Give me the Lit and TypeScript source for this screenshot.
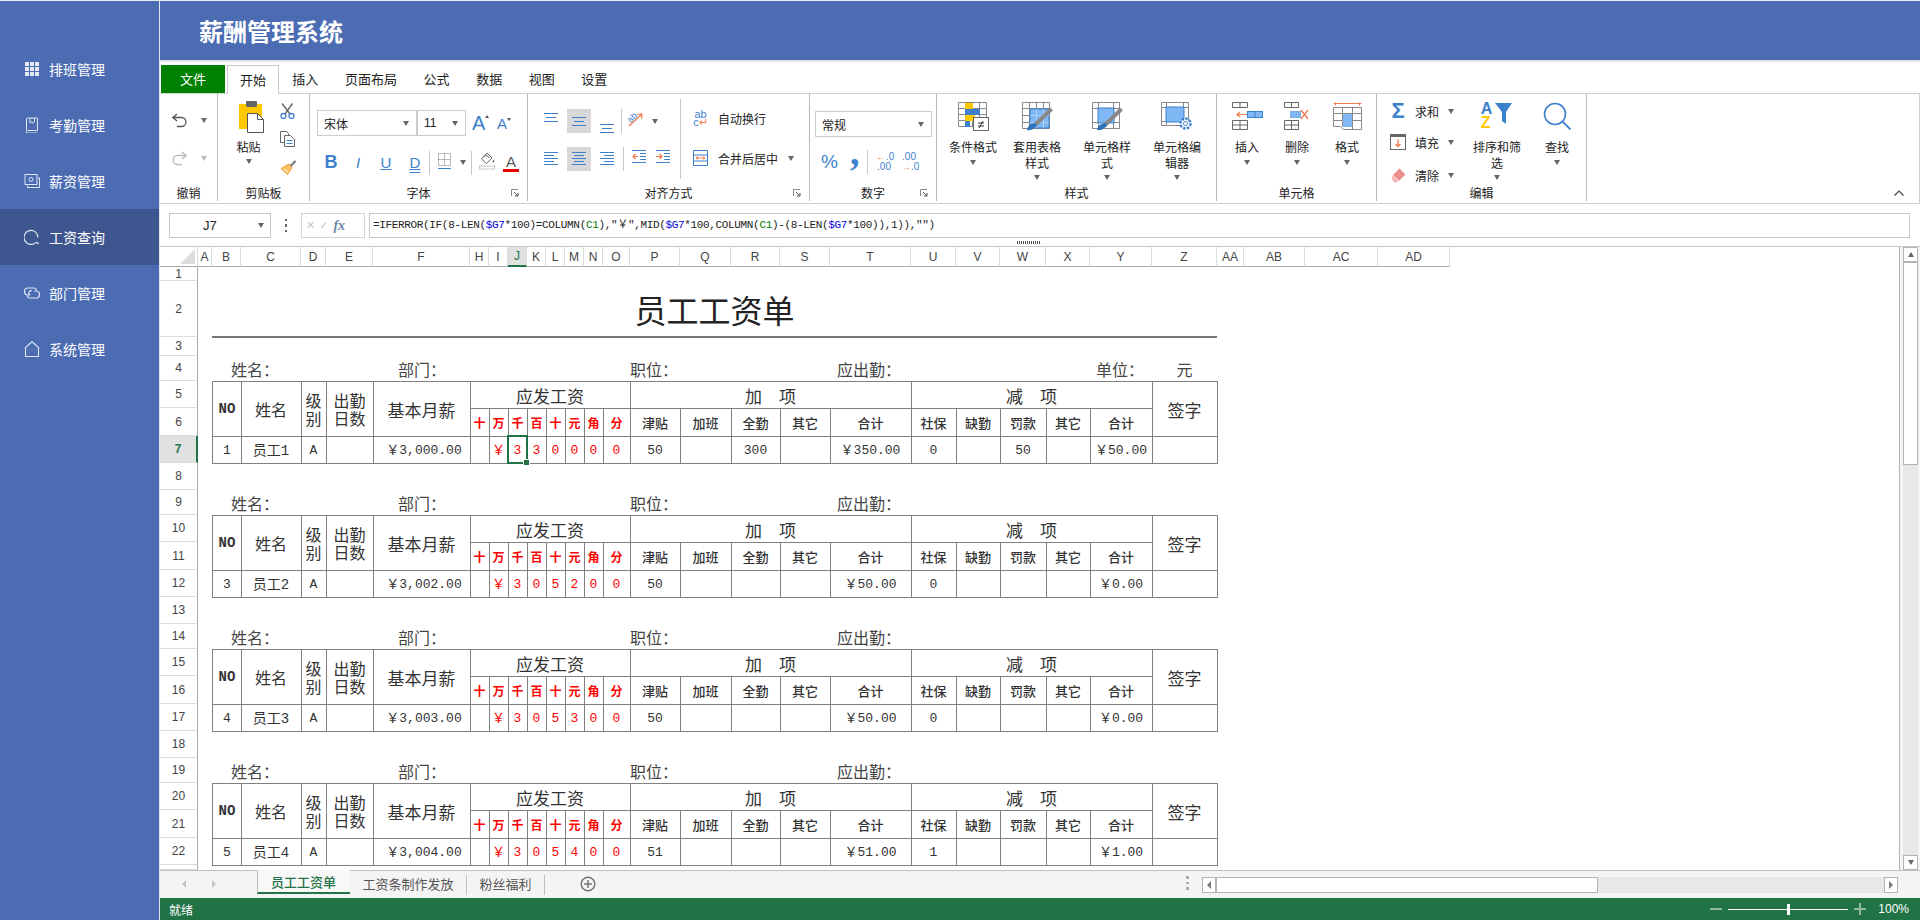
import { LitElement, css, html, svg } from "lit";
import { customElement } from "lit/decorators.js";

const BLUE = "#3d80cc";
const ORANGE = "#f47c50";

const COLS: [string, number][] = [
  ["", 38], ["A", 14], ["B", 29], ["C", 60], ["D", 25], ["E", 47], ["F", 97],
  ["H", 19], ["I", 19], ["J", 19], ["K", 19], ["L", 19], ["M", 19], ["N", 19], ["O", 27],
  ["P", 50], ["Q", 51], ["R", 49], ["S", 50], ["T", 81],
  ["U", 45], ["V", 44], ["W", 46], ["X", 44], ["Y", 62], ["Z", 65],
  ["AA", 27], ["AB", 61], ["AC", 73], ["AD", 72],
];
const colIdx = (name: string) => COLS.findIndex((c) => c[0] === name) + 1;

const ROW_H = [14, 56, 19, 25, 27, 28, 27, 27, 25, 27, 28, 27, 27, 25, 27, 28, 27, 27, 25, 27, 28, 27, 5];

const PEOPLE = [
  { start: 4, no: "1", name: "员工1", pay: "￥3,000.00", digits: ["", "￥", "3", "3", "0", "0", "0", "0"], add: ["50", "", "300", "", "￥350.00"], sub: ["0", "", "50", "", "￥50.00"] },
  { start: 9, no: "3", name: "员工2", pay: "￥3,002.00", digits: ["", "￥", "3", "0", "5", "2", "0", "0"], add: ["50", "", "", "", "￥50.00"], sub: ["0", "", "", "", "￥0.00"] },
  { start: 14, no: "4", name: "员工3", pay: "￥3,003.00", digits: ["", "￥", "3", "0", "5", "3", "0", "0"], add: ["50", "", "", "", "￥50.00"], sub: ["0", "", "", "", "￥0.00"] },
  { start: 19, no: "5", name: "员工4", pay: "￥3,004.00", digits: ["", "￥", "3", "0", "5", "4", "0", "0"], add: ["51", "", "", "", "￥51.00"], sub: ["1", "", "", "", "￥1.00"] },
];

const MONEY_COLS = ["H", "I", "J", "K", "L", "M", "N", "O"];
const MONEY_HEAD = ["十", "万", "千", "百", "十", "元", "角", "分"];
const ADD_COLS = ["P", "Q", "R", "S", "T"];
const ADD_HEAD = ["津贴", "加班", "全勤", "其它", "合计"];
const SUB_COLS = ["U", "V", "W", "X", "Y"];
const SUB_HEAD = ["社保", "缺勤", "罚款", "其它", "合计"];

const NAV = [
  { label: "排班管理", icon: "grid" },
  { label: "考勤管理", icon: "book" },
  { label: "薪资管理", icon: "money" },
  { label: "工资查询", icon: "search", active: true },
  { label: "部门管理", icon: "link" },
  { label: "系统管理", icon: "home" },
];

const navIcons: Record<string, unknown> = {
  grid: svg`<g fill="#e6eaf5"><rect x="1" y="1" width="4" height="4"/><rect x="6" y="1" width="4" height="4"/><rect x="11" y="1" width="4" height="4"/><rect x="1" y="6" width="4" height="4"/><rect x="6" y="6" width="4" height="4"/><rect x="11" y="6" width="4" height="4"/><rect x="1" y="11" width="4" height="4"/><rect x="6" y="11" width="4" height="4"/><rect x="11" y="11" width="4" height="4"/></g>`,
  book: svg`<g fill="none" stroke="#dfe5f3"><path d="M2.500 13V2a1 1 0 0 1 1-1h10v12.500H3.500a1.200 1.200 0 0 0 0 2.500h10"/><path d="M6 1v5l1.500-1 1.500 1 1.500-1V1"/></g>`,
  money: svg`<g fill="none" stroke="#dfe5f3"><rect x="1" y="1.500" width="12" height="10"/><circle cx="7" cy="6.500" r="2"/><path d="M14 5h1.500v9.500H3.500V12.500"/></g>`,
  search: svg`<g fill="none" stroke="#dfe5f3" stroke-width="1.200"><path d="M12 13.300A7 7 0 1 1 14 8.500"/><path d="M12.500 13l2 2"/></g>`,
  link: svg`<g fill="none" stroke="#dfe5f3" stroke-width="1.200"><path d="M6 10H4a3 3 0 0 1 0-7h6a3 3 0 0 1 2.700 2"/><path d="M10 6h2a3 3 0 0 1 0 7H6a3 3 0 0 1-2.700-2"/><path d="M6 10a2 2 0 0 1 2-4"/></g>`,
  home: svg`<path d="M1.500 15.500V6.500L8 .8l6.500 5.700v9z" fill="none" stroke="#dfe5f3" stroke-width="1.100"/>`,
};

const icon = (w: number, h: number, body: unknown) =>
  html`<svg width=${w} height=${h} viewBox="0 0 ${w} ${h}">${body}</svg>`;

const lines = (rows: [number, number, number][], color = BLUE) =>
  rows.map(([x, y, w]) => svg`<rect x=${x} y=${y} width=${w} height="1" fill=${color}/>`);

const ic = {
  undo: icon(17, 15, svg`<path d="M6 1 1.800 4.500 6 8M2 4.500h8.500a4.500 4.500 0 0 1 0 9H6" fill="none" stroke="#555" stroke-width="1.300"/>`),
  redo: icon(17, 15, svg`<path d="M11 1l4.200 3.500L11 8M15 4.500H6.500a4.500 4.500 0 0 0 0 9H11" fill="none" stroke="#bbb" stroke-width="1.300"/>`),
  paste: icon(25, 32, svg`<rect x="0" y="3" width="23" height="25" fill="#ffc800"/><rect x="7" y="0" width="11" height="6" rx="1" fill="#666"/><path d="M8.500 12.500h10l6 6v13h-16z" fill="#fff" stroke="#555"/><path d="M18.500 12.500v6h6" fill="none" stroke="#555"/>`),
  cut: icon(15, 16, svg`<path d="M2 .5 10 11M12.500 .5 5 11" stroke="#666" stroke-width="1.400" fill="none"/><circle cx="3.500" cy="13" r="2.500" fill="none" stroke="${BLUE}" stroke-width="1.300"/><circle cx="11.500" cy="13" r="2.500" fill="none" stroke="${BLUE}" stroke-width="1.300"/>`),
  copy: icon(15, 16, svg`<path d="M.5.5h6l2 2v9H.5z" fill="#fff" stroke="#666"/><path d="M4.500 4.500h6l4 4v7h-10z" fill="#fff" stroke="#666"/><path d="M6.500 9.500h6M6.500 12.500h6" stroke="${BLUE}"/>`),
  brush: icon(17, 15, svg`<path d="M9 4 1 8.500l6.500 6L12 7.500z" fill="#ffc45e" stroke="#f29a35"/><path d="M10.500 6 15.500 1" stroke="#777" stroke-width="2.200"/><path d="M4 9l4 3" stroke="#fff"/>`),
  border: icon(13, 17, svg`<path d="M.5 .5h12v12H.5zM.5 6.500h12M6.500 .5v12" fill="none" stroke="#777" stroke-dasharray="1 1"/><rect x="0" y="15" width="13" height="1" fill="${BLUE}"/>`),
  fill: icon(17, 18, svg`<path d="M8 1 2.500 7 7.500 11.500 13 6z" fill="#fff" stroke="#666"/><path d="M5 5c1-2 4-2 5 1" fill="none" stroke="#666"/><path d="M14.500 7.500c1 1.500 1.500 2.200 0 3-1.500-.8-1-1.500 0-3z" fill="#666"/><rect x=".5" y="14" width="15" height="3" fill="#fff" stroke="#c8c8c8"/>`),
  vAlign: icon(14, 9, lines([[0, 0, 14], [2, 4, 10], [0, 8, 14]])),
  left: icon(14, 15, lines([[0, 0, 14], [0, 3, 10], [0, 6, 14], [0, 9, 10], [0, 12, 14]])),
  center: icon(14, 15, lines([[0, 0, 14], [2, 3, 10], [0, 6, 14], [2, 9, 10], [0, 12, 14]])),
  right: icon(14, 15, lines([[0, 0, 14], [4, 3, 10], [0, 6, 14], [4, 9, 10], [0, 12, 14]])),
  orient: icon(16, 15, svg`<text x="1" y="9" font-size="9" font-family="Liberation Sans" fill="${BLUE}" transform="rotate(-45 5 7)">ab</text><path d="M2 14 14 3M10 2.500l5-.5-.5 5" fill="none" stroke="${ORANGE}" stroke-width="1.200"/>`),
  indentL: icon(14, 15, svg`${lines([[0, 0, 14], [8, 3, 6], [8, 6, 6], [8, 9, 6], [0, 12, 14]])}<path d="M6 6.500H1M3.500 4 1 6.500 3.500 9" fill="none" stroke="${ORANGE}" stroke-width="1.200"/>`),
  indentR: icon(14, 15, svg`${lines([[0, 0, 14], [8, 3, 6], [8, 6, 6], [8, 9, 6], [0, 12, 14]])}<path d="M0 6.500h5.500M3.500 4 6 6.500 3.500 9" fill="none" stroke="${ORANGE}" stroke-width="1.200"/>`),
  merge: icon(15, 16, svg`<path d="M.5 .5h14v15H.5zM.5 5h14M.5 11h14" fill="none" stroke="${BLUE}"/><path d="M3 8h9M5 6.500 3 8l2 1.500M10 6.500 12 8l-2 1.500" fill="none" stroke="${ORANGE}"/>`),
  cond: icon(31, 29, svg`<path d="M.5 .5h28v24H.5zM.5 6.500h28M.5 12.500h28M.5 18.500h28M7.500 .5v24M14.500 .5v24M21.500 .5v24" fill="none" stroke="#888"/><rect x="7" y="1" width="8" height="6" fill="#ffc800"/><rect x="7" y="7" width="15" height="6" fill="#3d80cc"/><rect x="7" y="13" width="10" height="6" fill="#ffc800"/><rect x="7" y="19" width="5" height="6" fill="#3d80cc"/><rect x="15.500" y="15.500" width="15" height="13" fill="#fff" stroke="#666"/><path d="M20 21h6M20 24h6M25 19l-4 7" stroke="#333"/>`),
  tbl: icon(31, 29, svg`<path d="M.5 .5h27v26H.5zM.5 6.500h27M.5 13.500h27M.5 20.500h27M7.500 .5v26M14.500 .5v26M21.500 .5v26" fill="none" stroke="#888"/><rect x="8" y="7" width="19" height="19" fill="#7fb8f5" stroke="#3d80cc"/><path d="M8 13.500h19M8 20.500h19M14.500 7v19M21.500 7v19" stroke="#a9cff7"/><path d="M12 24 29.500 7" stroke="#888" stroke-width="4"/><path d="M5 28c1-5 4-6 8-7l2 2c-2 3-5 6-10 5z" fill="#2e74b8"/>`),
  cellStyle: icon(31, 29, svg`<path d="M.5 .5h27v26H.5zM.5 6.500h27M.5 20.500h27M6.500 .5v26M21.500 .5v26" fill="none" stroke="#888"/><rect x="6" y="6" width="16" height="15" fill="#7fb8f5" stroke="#3d80cc"/><path d="M12 24 29.500 7" stroke="#888" stroke-width="4"/><path d="M5 28c1-5 4-6 8-7l2 2c-2 3-5 6-10 5z" fill="#2e74b8"/>`),
  cellEdit: icon(32, 29, svg`<path d="M.5 .5h27v23H.5zM.5 5.500h27M.5 19.500h27M5.500 .5v23M22.500 .5v23" fill="none" stroke="#888"/><rect x="5" y="5" width="18" height="15" fill="#7fb8f5" stroke="#3d80cc"/><circle cx="24.500" cy="21.500" r="5" fill="#fff" stroke="#3d80cc" stroke-width="2.500" stroke-dasharray="2.500 1.300"/><circle cx="24.500" cy="21.500" r="2" fill="none" stroke="#3d80cc"/>`),
  insert: icon(31, 28, svg`<path d="M.5 .5h15v5H.5zM8 .5v5M.5 18.500h15v9H.5zM.5 23h15M8 18.500v9" fill="none" stroke="#666"/><rect x="15.500" y="9.500" width="15" height="6" fill="#7fb8f5" stroke="#3d80cc"/><path d="M23 9.500v6" stroke="#3d80cc"/><path d="M15 12.500H5M8 10 5 12.500 8 15" fill="none" stroke="${ORANGE}" stroke-width="1.200"/>`),
  del: icon(26, 28, svg`<path d="M.5 .5h14v5H.5zM7.500 .5v5M.5 18.500h14v9H.5zM.5 23h14M7.500 18.500v9" fill="none" stroke="#666"/><rect x="6.500" y="9.500" width="10" height="6" fill="#7fb8f5" stroke="#3d80cc" stroke-dasharray="1 1"/><path d="M17 8l7 9M24 8l-7 9" stroke="${ORANGE}" stroke-width="1.300"/>`),
  fmt: icon(29, 28, svg`<path d="M.5 1.500h28M2.500 .5v3M26.500 .5v3" stroke="${ORANGE}" fill="none"/><path d="M.5 5.500h28v22H10.500l-3-3H.5zM.5 11.500h28M.5 18.500h28M9.500 5.500v19M19.500 5.500v22" fill="none" stroke="#888"/><rect x="10" y="12" width="9" height="13" fill="#7fb8f5"/>`),
  fillDown: icon(16, 16, svg`<rect x=".5" y=".5" width="15" height="15" fill="#fff" stroke="#666"/><rect x="0" y="0" width="16" height="3" fill="#666"/><path d="M8 5.500v7M5.500 10 8 12.500 10.500 10" fill="none" stroke="${ORANGE}" stroke-width="1.400"/>`),
  eraser: icon(15, 15, svg`<path d="M8.500 .5 14.500 6.500 8 13 2 7z" fill="#ee8f8f"/><path d="M1.800 7.500 7.500 13.500 5 14.500 2.500 14 .5 10z" fill="#f3b3b3"/>`),
  funnel: icon(18, 24, svg`<path d="M0 1h17l-6 9v12l-4-3v-9z" fill="${BLUE}"/>`),
  find: icon(28, 28, svg`<circle cx="12" cy="12" r="10.500" fill="none" stroke="${BLUE}" stroke-width="1.600"/><path d="M19.500 19.500l8 8" stroke="${BLUE}" stroke-width="1.800"/>`),
  launcher: icon(8, 8, svg`<path d="M.5 7V.5H7" fill="none" stroke="#888"/><path d="M3 3l4 4M7 4v3H4" fill="none" stroke="#555"/>`),
  plusCircle: icon(16, 16, svg`<circle cx="8" cy="8" r="6.800" fill="none" stroke="#777" stroke-width="1.500"/><path d="M8 4v8M4 8h8" stroke="#777" stroke-width="1.500"/>`),
};

@customElement("app-root")
export class AppRoot extends LitElement {
  private cell(col: string, row: number, body: unknown, cls = "", colEnd?: string, rowSpan = 1) {
    const start = colIdx(col);
    const end = colEnd ? colIdx(colEnd) + 1 : start + 1;
    const area = `grid-column:${start}/${end};grid-row:${row + 1}/span ${rowSpan}`;
    return html`<div class="c ${cls}" style=${area}>${body}</div>`;
  }

  private block(p: (typeof PEOPLE)[number]) {
    const s = p.start;
    const first = s === 4;
    return html`
      ${this.cell("B", s, "姓名：", "lab pl19", "E")}
      ${this.cell("F", s, "部门：", "lab pl25")}
      ${this.cell("P", s, "职位：", "lab", "S")}
      ${this.cell("T", s, "应出勤：", "lab pl7", "X")}
      ${first ? this.cell("Y", s, "单位：", "lab pl6") : ""}
      ${first ? this.cell("Z", s, "元", "lab ctr") : ""}

      ${this.cell("B", s + 1, "NO", "b lft bt ctr no", undefined, 2)}
      ${this.cell("C", s + 1, "姓名", "b bt ctr h16", undefined, 2)}
      ${this.cell("D", s + 1, html`级<br />别`, "b bt ctr h16 tight", undefined, 2)}
      ${this.cell("E", s + 1, html`出勤<br />日数`, "b bt ctr h16 tight", undefined, 2)}
      ${this.cell("F", s + 1, "基本月薪", "b bt ctr h17", undefined, 2)}
      ${this.cell("H", s + 1, "应发工资", "b bt ctr h17", "O")}
      ${this.cell("P", s + 1, "加　项", "b bt ctr h17", "T")}
      ${this.cell("U", s + 1, "减　项", "b bt ctr h17", "Y")}
      ${this.cell("Z", s + 1, "签字", "b bt ctr h17", undefined, 2)}

      ${MONEY_COLS.map((c, i) => this.cell(c, s + 2, MONEY_HEAD[i], "b ctr redhead"))}
      ${ADD_COLS.map((c, i) => this.cell(c, s + 2, ADD_HEAD[i], "b ctr sub"))}
      ${SUB_COLS.map((c, i) => this.cell(c, s + 2, SUB_HEAD[i], "b ctr sub"))}

      ${this.cell("B", s + 3, p.no, "b lft ctr num")}
      ${this.cell("C", s + 3, p.name, "b ctr num cjk")}
      ${this.cell("D", s + 3, "A", "b ctr num")}
      ${this.cell("E", s + 3, "", "b")}
      ${this.cell("F", s + 3, p.pay, "b ctr num pay")}
      ${MONEY_COLS.map((c, i) =>
        c === "J" && first
          ? html`<div class="c b red num sel-cell" style="grid-column:${colIdx(c)};grid-row:${s + 4}">
              ${p.digits[i]}<span class="sel"><span class="handle"></span></span>
            </div>`
          : this.cell(c, s + 3, p.digits[i], "b red num"),
      )}
      ${ADD_COLS.map((c, i) => this.cell(c, s + 3, p.add[i], "b ctr num"))}
      ${SUB_COLS.map((c, i) => this.cell(c, s + 3, p.sub[i], "b ctr num"))}
      ${this.cell("Z", s + 3, "", "b")}
    `;
  }

  private sheet() {
    const cols = COLS.map((c) => c[1] + "px").join(" ") + " 1fr";
    const rows = "20px " + ROW_H.map((h) => h + "px").join(" ");
    return html`
      <div class="sheet" style="grid-template-columns:${cols};grid-template-rows:${rows}">
        <div class="corner"><i></i></div>
        ${COLS.slice(1).map(
          ([n], i) => html`<div class="ch ${n === "J" ? "on" : ""}" style="grid-column:${i + 2};grid-row:1">${n}</div>`,
        )}
        ${ROW_H.map(
          (_, i) => html`<div class="rh ${i + 1 === 7 ? "on" : ""}" style="grid-column:1;grid-row:${i + 2}">${i + 1 === 23 ? "" : i + 1}</div>`,
        )}
        ${this.cell("B", 2, "员工工资单", "title", "Z")}
        ${PEOPLE.map((p) => this.block(p))}
      </div>
    `;
  }

  private big(ico: unknown, label: unknown, cls = "") {
    return html`<div class="big ${cls}">
      <div class="big-ico">${ico}</div>
      <div class="big-txt">${label}</div>
      <i class="caret"></i>
    </div>`;
  }

  private label(text: string, launcher = false) {
    return html`<div class="glabel"><span></span><span>${text}</span>${launcher ? html`<span class="launch">${ic.launcher}</span>` : html`<span></span>`}</div>`;
  }

  private ribbon() {
    return html`
      <div class="ribbon">
        <section class="group" style="width:58px">
          <div class="body undo">
            <div class="row">${ic.undo}<i class="caret ml13"></i></div>
            <div class="row">${ic.redo}<i class="caret light ml13"></i></div>
          </div>
          ${this.label("撤销")}
        </section>

        <section class="group" style="width:92px">
          <div class="body clip">
            <div class="paste">
              ${ic.paste}
              <div class="paste-txt">粘贴</div>
              <i class="caret"></i>
            </div>
            <div class="clip-side">${ic.cut}${ic.copy}${ic.brush}</div>
          </div>
          ${this.label("剪贴板")}
        </section>

        <section class="group" style="width:218px">
          <div class="body font">
            <div class="row r1">
              <div class="select" style="width:100px"><span>宋体</span><i class="caret"></i></div>
              <div class="select" style="width:49px"><span class="en">11</span><i class="caret"></i></div>
              <span class="grow big-a">A<i class="tri up"></i></span>
              <span class="grow small-a">A<i class="tri"></i></span>
            </div>
            <div class="row r2">
              <span class="fs" style="width:28px"><b class="bl">B</b></span>
              <span class="fs" style="width:26px"><em class="bl">I</em></span>
              <span class="fs" style="width:30px"><u class="bl">U</u></span>
              <span class="fs" style="width:28px"><u class="bl dbl">D</u></span>
              <i class="vsep"></i>
              <span class="ml8">${ic.border}</span>
              <i class="caret ml9"></i>
              <i class="vsep ml5"></i>
              <span class="ml7">${ic.fill}</span>
              <span class="color-a ml7">A</span>
            </div>
          </div>
          ${this.label("字体", true)}
        </section>

        <section class="group" style="width:282px">
          <div class="body align">
            <div class="al-left">
              <div class="row">
                <span class="al vt">${ic.vAlign}</span>
                <span class="al on">${ic.vAlign}</span>
                <span class="al vb">${ic.vAlign}</span>
                <i class="vsep al-sep"></i>
                <span class="ml5">${ic.orient}</span>
                <i class="caret ml9"></i>
              </div>
              <div class="row r2">
                <span class="al">${ic.left}</span>
                <span class="al on">${ic.center}</span>
                <span class="al">${ic.right}</span>
                <i class="vsep"></i>
                <span class="ml8">${ic.indentL}</span>
                <span class="ml10">${ic.indentR}</span>
              </div>
            </div>
            <i class="tall-sep"></i>
            <div class="al-right">
              <div class="row">
                <span class="wrap-ico"><span>ab</span><span>c<em>↵</em></span></span>
                <span class="ml10">自动换行</span>
              </div>
              <div class="row">
                ${ic.merge}
                <span class="ml10">合并后居中</span>
                <i class="caret ml10"></i>
              </div>
            </div>
          </div>
          ${this.label("对齐方式", true)}
        </section>

        <section class="group" style="width:127px">
          <div class="body num-g">
            <div class="select" style="width:117px"><span>常规</span><i class="caret"></i></div>
            <div class="row r2">
              <span class="pct">%</span>
              <span class="comma">,</span>
              <i class="vsep s9"></i>
              <span class="dec ml8"><span><em>←</em>.0</span><span>.00</span></span>
              <span class="dec ml10"><span>.00</span><span><em>→</em>.0</span></span>
            </div>
          </div>
          ${this.label("数字", true)}
        </section>

        <section class="group" style="width:280px">
          <div class="body bigs" style="padding-left:7px">
            ${this.big(ic.cond, "条件格式", "w58")}
            ${this.big(ic.tbl, html`套用表格<br />样式`)}
            ${this.big(ic.cellStyle, html`单元格样<br />式`)}
            ${this.big(ic.cellEdit, html`单元格编<br />辑器`)}
          </div>
          ${this.label("样式")}
        </section>

        <section class="group" style="width:160px">
          <div class="body bigs" style="padding-left:5px">
            ${this.big(ic.insert, "插入", "w50")}
            ${this.big(ic.del, "删除", "w50")}
            ${this.big(ic.fmt, "格式", "w50")}
          </div>
          ${this.label("单元格")}
        </section>

        <section class="group" style="width:210px">
          <div class="body bigs">
            <div class="edit-col">
              <div class="row"><span class="ico16 sigma">Σ</span><span class="ml9">求和</span><i class="caret ml9"></i></div>
              <div class="row"><span class="ico16">${ic.fillDown}</span><span class="ml9">填充</span><i class="caret ml9"></i></div>
              <div class="row"><span class="ico16">${ic.eraser}</span><span class="ml9">清除</span><i class="caret ml9"></i></div>
            </div>
            ${this.big(html`<span class="sort"><span class="az"><span>A</span><span>Z</span></span>${ic.funnel}</span>`, html`排序和筛<br />选`, "w60")}
            ${this.big(ic.find, "查找", "w60")}
          </div>
          ${this.label("编辑")}
        </section>

        <div class="collapse"><svg width="10" height="6" viewBox="0 0 10 6"><path d="M.5 5.500 5 1l4.500 4.500" fill="none" stroke="#444" stroke-width="1.200"/></svg></div>
      </div>
    `;
  }

  render() {
    return html`
      <aside class="side">
        ${NAV.map(
          (n) => html`<div class="nav ${n.active ? "active" : ""}">
            <svg width="16" height="16" viewBox="0 0 16 16">${navIcons[n.icon]}</svg>
            <span>${n.label}</span>
          </div>`,
        )}
      </aside>
      <main class="main">
        <header class="topbar">薪酬管理系统</header>
        <nav class="tabs">
          <div class="file">文件</div>
          <div class="tab active">开始</div>
          ${["插入", "页面布局", "公式", "数据", "视图", "设置"].map((t) => html`<div class="tab">${t}</div>`)}
        </nav>
        ${this.ribbon()}
        <div class="fbar">
          <div class="fbar-row">
            <div class="namebox"><span>J7</span><i class="caret"></i></div>
            <div class="kebab"><i></i><i></i><i></i></div>
            <div class="fxbox"><span>✕</span><span>✓</span><em>fx</em></div>
            <div class="formula">=IFERROR(IF(8-LEN(<span class="fb">$G7</span>*100)=COLUMN(<span class="fg">C1</span>),"￥",MID(<span class="fb">$G7</span>*100,COLUMN(<span class="fg">C1</span>)-(8-LEN(<span class="fb">$G7</span>*100)),1)),"")</div>
          </div>
          <div class="splitter"></div>
        </div>
        <div class="work">
          ${this.sheet()}
          <div class="vscroll">
            <div class="sb-btn"><i class="tri-up"></i></div>
            <div class="v-thumb"></div>
            <div class="v-track"></div>
            <div class="sb-btn"><i class="caret"></i></div>
          </div>
        </div>
        <div class="sheetbar">
          <span class="arrow l"></span>
          <span class="arrow r"></span>
          <div class="stab active">员工工资单</div>
          <div class="stab">工资条制作发放</div>
          <div class="stab">粉丝福利</div>
          <span class="plus">${ic.plusCircle}</span>
          <div class="kebab dim"><i></i><i></i><i></i></div>
          <div class="hscroll">
            <div class="h-btn"><i class="arrow-l"></i></div>
            <div class="h-thumb"></div>
            <div class="h-track"></div>
            <div class="h-btn"><i class="arrow-r"></i></div>
          </div>
        </div>
        <footer class="status">
          <span>就绪</span>
          <div class="zoom">
            <i class="minus"></i>
            <div class="slider"><i class="knob"></i></div>
            <i class="plus-s"></i>
            <span class="pcnt">100%</span>
          </div>
        </footer>
      </main>
    `;
  }

  static styles = css`
    :host {
      --blue: #3d80cc;
      --orange: #f47c50;
      display: flex;
      width: 1920px;
      height: 920px;
      overflow: hidden;
      box-sizing: border-box;
      padding-top: 1px;
      background: #e9ebf0;
      font-family: "Noto Sans CJK SC", "Liberation Sans", sans-serif;
      font-size: 12px;
      color: #222;
    }
    i {
      display: block;
      font-style: normal;
    }

    .side {
      width: 159px;
      flex: none;
      padding-top: 40px;
      background: #4b6cb3;
      border-right: 1px solid #e3e6f0;
      color: #fff;
      font-size: 14px;
    }
    .nav {
      display: flex;
      align-items: center;
      gap: 9px;
      height: 56px;
      padding-left: 24px;
    }
    .nav.active {
      background: #3e568f;
    }

    .main {
      flex: 1;
      min-width: 0;
      display: flex;
      flex-direction: column;
      background: #fff;
    }
    .topbar {
      height: 59px;
      padding-left: 39px;
      background: #4b6cb3;
      color: #fff;
      font-size: 24px;
      font-weight: 700;
      line-height: 59px;
    }
    .tabs {
      display: flex;
      align-items: flex-end;
      height: 33px;
      padding-left: 1px;
      border-top: 2px solid #e1e4ee;
      box-sizing: border-box;
      font-size: 13px;
    }
    .file {
      width: 64px;
      height: 28px;
      margin-right: 2px;
      background: #008000;
      color: #fff;
      text-align: center;
      line-height: 27px;
    }
    .tab {
      height: 28px;
      padding: 0 13.300px;
      line-height: 27px;
    }
    .tab.active {
      position: relative;
      z-index: 1;
      height: 29px;
      margin-bottom: -1px;
      padding: 0 12px;
      background: #fff;
      border: 1px solid #c8c8c8;
      border-bottom: 0;
      box-sizing: border-box;
    }

    .ribbon {
      display: flex;
      height: 111px;
      box-sizing: border-box;
      border: 1px solid #cfcfcf;
      border-width: 1px 1px 1px 0;
    }
    .group {
      flex: none;
      display: flex;
      flex-direction: column;
      height: 107px;
      box-sizing: border-box;
      border-right: 1px solid #b8b8b8;
    }
    .body {
      height: 90px;
      box-sizing: border-box;
    }
    .glabel {
      display: grid;
      grid-template-columns: 1fr auto 1fr;
      align-items: center;
      height: 17px;
      line-height: 17px;
      font-size: 12px;
    }
    .launch {
      justify-self: end;
      display: flex;
      margin-right: 8px;
    }
    .row {
      display: flex;
      align-items: center;
    }
    .caret {
      flex: none;
      width: 0;
      height: 0;
      border: 3.500px solid transparent;
      border-top: 5px solid #666;
      border-bottom: 0;
    }
    .caret.light {
      border-top-color: #bbb;
    }
    .ml5 { margin-left: 5px; }
    .ml7 { margin-left: 7px; }
    .ml8 { margin-left: 8px; }
    .ml9 { margin-left: 9px; }
    .ml10 { margin-left: 10px; }
    .ml13 { margin-left: 13px; }
    .vsep {
      flex: none;
      width: 1px;
      height: 24px;
      background: #c8c8c8;
    }
    .s9 {
      margin-left: 9px;
    }

    .undo {
      display: grid;
      grid-template-rows: 38px 38px;
      padding: 7px 0 0 11px;
    }

    .clip {
      display: flex;
    }
    .paste {
      width: 61px;
      padding-top: 7px;
      display: flex;
      flex-direction: column;
      align-items: center;
    }
    .paste svg {
      margin-left: 6px;
    }
    .paste-txt {
      margin-top: 6px;
      line-height: 15px;
    }
    .paste .caret {
      margin-top: 5px;
    }
    .clip-side {
      display: grid;
      grid-auto-rows: 28px;
      align-items: center;
      padding-top: 3px;
      margin-left: 1px;
    }

    .font {
      padding: 16px 0 0 7px;
    }
    .font .r1 {
      height: 26px;
    }
    .font .r2 {
      height: 19px;
      margin-top: 17px;
    }
    .select {
      flex: none;
      display: flex;
      align-items: center;
      justify-content: space-between;
      height: 26px;
      box-sizing: border-box;
      padding: 0 7px 0 6px;
      border: 1px solid #ccc;
      font-size: 12px;
    }
    .en {
      font-family: "Liberation Sans", sans-serif;
    }
    .grow {
      position: relative;
      font-family: "Liberation Sans", sans-serif;
      color: var(--blue);
    }
    .big-a {
      width: 16px;
      margin-left: 6px;
      font-size: 20px;
    }
    .small-a {
      width: 13px;
      margin-left: 9px;
      font-size: 15px;
    }
    .tri {
      position: absolute;
      top: 3px;
      right: -1px;
      border: 2.500px solid transparent;
      border-top: 3px solid #555;
      border-bottom: 0;
    }
    .tri.up {
      border-top: 0;
      border-bottom: 3px solid #555;
    }
    .fs {
      flex: none;
      text-align: center;
      font-family: "Liberation Sans", sans-serif;
      font-size: 15px;
    }
    .bl {
      color: var(--blue);
    }
    .fs b {
      font-size: 18px;
    }
    .dbl {
      text-decoration-style: double;
    }
    .color-a {
      width: 16px;
      border-bottom: 3px solid #e60000;
      color: #555;
      font-family: "Liberation Sans", sans-serif;
      font-size: 15px;
      line-height: 15px;
      text-align: center;
    }

    .align {
      display: flex;
    }
    .al-left {
      width: 141px;
      padding: 15px 0 0 11px;
    }
    .al-left .r2 {
      margin-top: 14px;
    }
    .al {
      flex: none;
      width: 24px;
      height: 24px;
      margin-right: 4px;
      box-sizing: border-box;
      display: grid;
      justify-items: center;
      align-items: center;
    }
    .al.on {
      background: #d8d8d8;
    }
    .al.vt {
      align-items: start;
      padding-top: 4px;
    }
    .al.vb {
      align-items: end;
    }
    .al-sep {
      margin-left: -2px;
    }
    .tall-sep {
      flex: none;
      width: 1px;
      height: 80px;
      margin-top: 5px;
      background: #c8c8c8;
    }
    .al-right {
      display: grid;
      grid-template-rows: 40px 40px;
      padding: 4px 0 0 12px;
    }
    .wrap-ico {
      display: flex;
      flex-direction: column;
      width: 15px;
      color: var(--blue);
      font-family: "Liberation Sans", sans-serif;
      font-size: 11px;
      line-height: 8px;
      text-align: center;
    }
    .wrap-ico em {
      color: var(--orange);
      font-style: normal;
    }

    .num-g {
      padding: 17px 0 0 5px;
    }
    .num-g .r2 {
      height: 19px;
      margin-top: 15px;
      padding-left: 6px;
    }
    .pct {
      width: 15px;
      color: var(--blue);
      font-family: "Liberation Sans", sans-serif;
      font-size: 19px;
    }
    .comma {
      width: 8px;
      height: 19px;
      margin-left: 14px;
      color: var(--blue);
      font-family: "Liberation Serif", serif;
      font-size: 38px;
      font-weight: 700;
      line-height: 0;
    }
    .dec {
      display: flex;
      flex-direction: column;
      width: 15px;
      color: var(--blue);
      font-family: "Liberation Sans", sans-serif;
      font-size: 10px;
      line-height: 10px;
      text-align: right;
    }
    .dec em {
      color: var(--orange);
      font-style: normal;
    }

    .bigs {
      display: flex;
    }
    .big {
      flex: none;
      width: 70px;
      padding-top: 8px;
      display: flex;
      flex-direction: column;
      align-items: center;
    }
    .w50 { width: 50px; }
    .w58 { width: 58px; }
    .w60 { width: 60px; }
    .big-ico {
      height: 29px;
      margin-bottom: 8px;
      line-height: 0;
    }
    .big-txt {
      line-height: 15.500px;
      text-align: center;
    }
    .big .caret {
      margin-top: 5px;
    }
    .edit-col {
      flex: none;
      width: 90px;
      padding: 2px 0 0 13px;
      box-sizing: border-box;
      display: grid;
      grid-template-rows: 30px 32px 34px;
    }
    .ico16 {
      flex: none;
      width: 16px;
      display: flex;
      justify-content: center;
    }
    .sigma {
      color: var(--blue);
      font-family: "Liberation Sans", sans-serif;
      font-size: 22px;
      line-height: 20px;
      font-weight: 700;
    }
    .sort {
      display: flex;
      gap: 3px;
      align-items: flex-start;
    }
    .az {
      display: flex;
      flex-direction: column;
      font-family: "Liberation Sans", sans-serif;
      font-size: 16px;
      line-height: 14px;
      font-weight: 700;
    }
    .az span:first-child {
      color: var(--blue);
    }
    .az span:last-child {
      color: #ffc800;
    }

    .collapse {
      flex: 1;
      display: flex;
      align-items: flex-end;
      justify-content: flex-end;
      padding: 0 15px 7px 0;
    }

    .fbar {
      display: flex;
      flex-direction: column;
      height: 42px;
      box-sizing: border-box;
      padding: 9px 10px 0 9px;
    }
    .fbar-row {
      display: flex;
      align-items: stretch;
      height: 25px;
    }
    .namebox {
      display: flex;
      align-items: center;
      justify-content: space-between;
      width: 102px;
      box-sizing: border-box;
      padding: 0 6px 0 33px;
      border: 1px solid #c8c8c8;
      font-family: "Liberation Sans", sans-serif;
      font-size: 13px;
    }
    .kebab {
      display: flex;
      flex-direction: column;
      justify-content: center;
      gap: 3px;
      width: 30px;
      align-items: center;
    }
    .kebab i {
      width: 2.500px;
      height: 2.500px;
      background: #666;
    }
    .fxbox {
      display: flex;
      align-items: center;
      gap: 4px;
      width: 64px;
      box-sizing: border-box;
      padding-left: 4px;
      border: 1px solid #d4d4d4;
      color: #c8c8c8;
      font-family: "DejaVu Sans", sans-serif;
      font-size: 11px;
    }
    .fxbox em {
      color: #6d87a8;
      margin-left: 1px;
      font-family: "Liberation Serif", serif;
      font-size: 14px;
      font-weight: 700;
    }
    .formula {
      flex: 1;
      margin-left: 4px;
      padding-left: 3px;
      border: 1px solid #c8c8c8;
      font-family: "Liberation Mono", "Noto Sans CJK SC", monospace;
      font-size: 11px;
      letter-spacing: -0.340px;
      line-height: 23px;
      white-space: nowrap;
    }
    .fb { color: #0000e0; }
    .fg { color: #007a00; }
    .splitter {
      width: 23px;
      height: 3px;
      margin: 3px auto 0;
      transform: translateX(-11px);
      background: repeating-linear-gradient(90deg, #555 0 1px, transparent 1px 2px);
    }

    .work {
      flex: 1;
      min-height: 0;
      display: flex;
      border-top: 1px solid #c8c8c8;
    }
    .sheet {
      flex: 1;
      min-width: 0;
      display: grid;
      overflow: hidden;
      height: 623px;
    }
    .corner {
      grid-column: 1;
      grid-row: 1;
      display: flex;
      justify-content: flex-end;
      align-items: flex-end;
      padding: 0 2px 2px 0;
      border-right: 1px solid #d8d8d8;
      border-bottom: 1px solid #aaa;
    }
    .corner i {
      width: 0;
      height: 0;
      border-left: 15px solid transparent;
      border-bottom: 15px solid #dcdcdc;
    }
    .ch,
    .rh {
      display: flex;
      align-items: center;
      justify-content: center;
      box-sizing: border-box;
      color: #444;
      font-family: "Liberation Sans", sans-serif;
      font-size: 12px;
    }
    .ch {
      border-right: 1px solid #d8dfd8;
      border-bottom: 1px solid #aaa;
    }
    .ch.on {
      background: #e1e1e1;
      border-bottom: 2px solid #217346;
      color: #217346;
    }
    .rh {
      border-right: 1px solid #aaa;
      border-bottom: 1px solid #dcdcdc;
    }
    .rh.on {
      background: #e1e1e1;
      border-right: 2px solid #217346;
      color: #217346;
      font-weight: 700;
    }
    .c {
      display: flex;
      align-items: center;
      box-sizing: border-box;
      min-width: 0;
      white-space: nowrap;
      color: #333;
      font-size: 14px;
    }
    .ctr {
      justify-content: center;
      text-align: center;
    }
    .title {
      justify-content: center;
      margin-bottom: -1px;
      border-bottom: 2px solid #777;
      color: #222;
      font-size: 32px;
    }
    .lab {
      font-size: 16px;
      color: #444;
    }
    .pl19 { padding-left: 19px; }
    .pl25 { padding-left: 25px; }
    .pl7 { padding-left: 7px; }
    .pl6 { padding-left: 6px; }
    .b {
      margin: 0 -1px -1px 0;
      border-right: 1px solid #808080;
      border-bottom: 1px solid #808080;
    }
    .bt {
      border-top: 1px solid #808080;
    }
    .lft {
      border-left: 1px solid #808080;
    }
    .h16 {
      font-size: 16px;
    }
    .h17 {
      font-size: 17px;
    }
    .tight {
      line-height: 18px;
    }
    .no {
      font-family: "Liberation Mono", monospace;
      font-size: 14px;
      font-weight: 700;
    }
    .num {
      font-family: "Liberation Mono", "Noto Sans CJK SC", monospace;
      font-size: 13px;
      line-height: 14px;
      padding-top: 2px;
    }
    .num.cjk {
      font-size: 14px;
    }
    .pay {
      padding-left: 5px;
    }
    .sub {
      font-size: 13px;
      font-weight: 500;
    }
    .redhead {
      color: #f00;
      font-size: 12px;
      font-weight: 700;
    }
    .red {
      justify-content: center;
      color: #f00;
    }
    .sel-cell {
      position: relative;
    }
    .sel {
      position: absolute;
      inset: -1px;
      border: 2px solid #217346;
    }
    .handle {
      position: absolute;
      right: -4px;
      bottom: -4px;
      width: 5px;
      height: 5px;
      background: #217346;
      border: 1px solid #fff;
    }

    .vscroll {
      flex: none;
      width: 21px;
      box-sizing: border-box;
      display: flex;
      flex-direction: column;
      padding-left: 3px;
      border-left: 1px solid #b4b4b4;
      background: #f4f4f4;
    }
    .sb-btn {
      flex: none;
      width: 15px;
      height: 15px;
      box-sizing: border-box;
      display: grid;
      place-items: center;
      border: 1px solid #b4b4b4;
      background: #fff;
    }
    .tri-up {
      width: 0;
      height: 0;
      border: 3.500px solid transparent;
      border-bottom: 5px solid #666;
      border-top: 0;
    }
    .v-thumb {
      flex: none;
      width: 15px;
      height: 203px;
      box-sizing: border-box;
      border: 1px solid #b4b4b4;
      background: #fff;
    }
    .v-track {
      flex: 1;
      width: 15px;
      background: #e8e8e8;
    }

    .sheetbar {
      display: flex;
      align-items: flex-start;
      height: 28px;
      box-sizing: border-box;
      border-top: 1px solid #c0c0c0;
      background: #f4f4f4;
      font-size: 13px;
      color: #555;
    }
    .arrow {
      flex: none;
      width: 0;
      height: 0;
      margin-top: 9px;
      border: 4px solid transparent;
    }
    .arrow.l {
      margin-left: 22px;
      border-left: 0;
      border-right: 4px solid #c4c4c4;
    }
    .arrow.r {
      margin-left: 26px;
      border-right: 0;
      border-left: 4px solid #c4c4c4;
    }
    .stab {
      flex: none;
      height: 20px;
      line-height: 18px;
      margin-top: 4px;
      padding: 0 12.500px;
      border-right: 1px solid #c0c0c0;
    }
    .stab.active {
      margin: -1px 0 0 41px;
      height: 24px;
      line-height: 23px;
      width: 93px;
      box-sizing: border-box;
      padding: 0 13px;
      border: 0;
      border-left: 1px solid #c0c0c0;
      border-bottom: 2px solid #217346;
      background: #f8f8f8;
      color: #217346;
      font-weight: 500;
    }
    .plus {
      margin: 5px 0 0 35px;
      display: flex;
    }
    .kebab.dim {
      height: 16px;
      margin: 4px 7px 0 auto;
      width: 15px;
    }
    .kebab.dim i {
      background: #aaa;
    }
    .hscroll {
      flex: none;
      display: flex;
      width: 696px;
      height: 16px;
      margin: 6px 22px 0 0;
      background: #e8e8e8;
    }
    .h-btn {
      flex: none;
      width: 14px;
      box-sizing: border-box;
      display: grid;
      place-items: center;
      border: 1px solid #b4b4b4;
      background: #fff;
    }
    .arrow-l {
      width: 0;
      height: 0;
      border: 4px solid transparent;
      border-left: 0;
      border-right: 4px solid #777;
    }
    .arrow-r {
      width: 0;
      height: 0;
      border: 4px solid transparent;
      border-right: 0;
      border-left: 4px solid #777;
    }
    .h-thumb {
      flex: none;
      width: 382px;
      box-sizing: border-box;
      border: 1px solid #b4b4b4;
      background: #fff;
    }
    .h-track {
      flex: 1;
    }

    .status {
      display: flex;
      align-items: center;
      justify-content: space-between;
      height: 22px;
      padding: 0 11px 0 9px;
      background: #217346;
      color: #fff;
      font-size: 12px;
    }
    .zoom {
      display: flex;
      align-items: center;
    }
    .minus {
      width: 12px;
      height: 2px;
      background: #8fb9a3;
    }
    .slider {
      position: relative;
      width: 120px;
      height: 1px;
      margin: 0 6px;
      background: #fff;
    }
    .knob {
      position: absolute;
      left: 59px;
      top: -5px;
      width: 3px;
      height: 11px;
      background: #fff;
    }
    .plus-s {
      width: 12px;
      height: 12px;
      background:
        linear-gradient(#8fb9a3, #8fb9a3) center / 12px 2px no-repeat,
        linear-gradient(#8fb9a3, #8fb9a3) center / 2px 12px no-repeat;
    }
    .pcnt {
      margin-left: 12px;
      font-family: "Liberation Sans", sans-serif;
    }
  `;
}
